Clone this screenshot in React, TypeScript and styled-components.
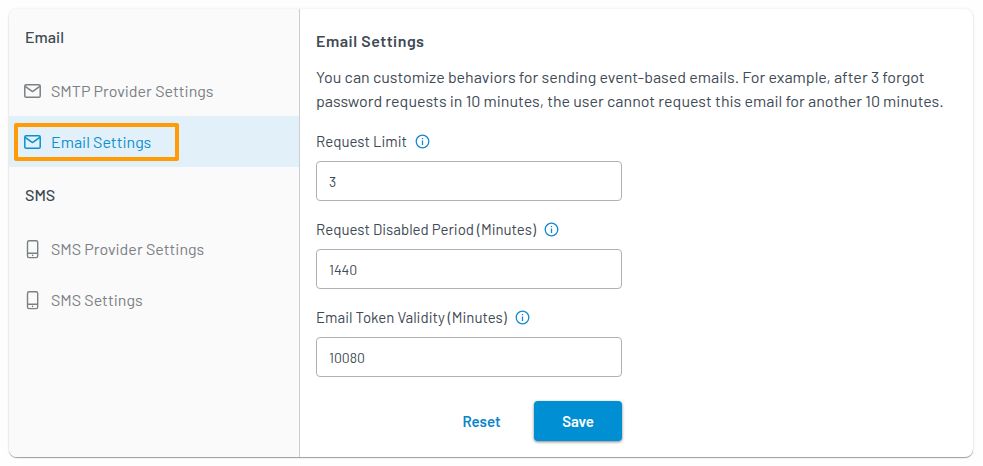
import React from "react";
import styled, { createGlobalStyle } from "styled-components";

const GlobalStyle = createGlobalStyle`
  *, *::before, *::after { box-sizing: border-box; }
  body {
    margin: 0;
    background: #fefefe;
    color: #404a54;
    font-family: Barlow, Roboto, "Liberation Sans", sans-serif;
    font-size: 16px;
  }
`;

const Page = styled.main`
  height: 466px;
  padding: 9px 10px 9px 9px;
`;

const Card = styled.div`
  display: flex;
  height: 448px;
  border-radius: 8px;
  overflow: hidden;
  background: #fff;
  box-shadow: 0 1px 1px rgba(0, 0, 0, 0.36), 0 0 3px rgba(0, 0, 0, 0.1);
`;

const Sidebar = styled.nav`
  width: 291px;
  flex: none;
  background: #fafafa;
  border-right: 1px solid #cbcdcf;
`;

const GroupTitle = styled.div`
  height: 56px;
  padding: 0 16px;
  font-weight: 500;
  line-height: 55px;
`;

const NavItem = styled.a<{ $active?: boolean }>`
  position: relative;
  display: flex;
  align-items: center;
  gap: 10px;
  height: 51px;
  padding: 0 15px;
  color: ${(p) => (p.$active ? "#0a8fd2" : "#7b8085")};
  background: ${(p) => (p.$active ? "#e2f1f9" : "transparent")};
`;

const Highlight = styled.span`
  position: absolute;
  left: 5px;
  top: 7px;
  width: 165px;
  height: 38px;
  border: 4px solid #ff9b05;
  border-radius: 2px;
`;

const Content = styled.section`
  flex: 1;
  padding: 20px 16px 0;
`;

const Title = styled.h1`
  margin: 0;
  font-size: 16px;
  font-weight: 600;
  letter-spacing: 0.5px;
  line-height: 23px;
`;

const Description = styled.p`
  margin: 13px 0 0;
  line-height: 24px;
`;

const Form = styled.form`
  width: 306px;
  padding-top: 16px;
`;

const Field = styled.label`
  display: block;
  height: 88px;
`;

const FieldLabel = styled.span`
  display: flex;
  align-items: center;
  gap: 8px;
  height: 24px;
  margin-bottom: 8px;
  font-size: 15px;
  white-space: nowrap;
`;

const Input = styled.input`
  display: block;
  width: 306px;
  height: 40px;
  padding: 1px 12px 0;
  border: 1px solid #aeb2b5;
  border-radius: 4px;
  background: #fff;
  color: #404a54;
  font: 14px Barlow, Roboto, "Liberation Sans", sans-serif;
  outline: none;
`;

const Actions = styled.div`
  display: flex;
  justify-content: flex-end;
  padding-top: 8px;
`;

const Button = styled.button<{ $primary?: boolean }>`
  width: ${(p) => (p.$primary ? 88 : 105)}px;
  height: 40px;
  padding: 0;
  border: 0;
  border-radius: 4px;
  font: 600 15px Barlow, Roboto, "Liberation Sans", sans-serif;
  color: ${(p) => (p.$primary ? "#fff" : "#0a85c9")};
  background: ${(p) => (p.$primary ? "#008fd3" : "transparent")};
  box-shadow: ${(p) => (p.$primary ? "0 1px 3px rgba(0, 0, 0, 0.5)" : "none")};
`;

const Icon = styled.svg`
  flex: none;
  display: block;
  fill: none;
  stroke: currentColor;
`;

const InfoSvg = styled(Icon)`
  color: #1289cf;
`;

const MailIcon = () => (
  <Icon width="17" height="17" viewBox="0 0 17 17" strokeWidth="1.5" strokeLinejoin="round">
    <rect x="0.8" y="2.7" width="15.4" height="12.6" rx="1.4" />
    <path d="M1.2 4.4L8.5 9.6L15.8 4.4" />
  </Icon>
);

const PhoneIcon = () => (
  <Icon width="17" height="20" viewBox="0 0 17 20" strokeWidth="1.4">
    <rect x="3.5" y="1.8" width="10.2" height="16.8" rx="1.6" />
    <path d="M3.5 14.2H13.7" />
    <circle cx="8.6" cy="16.4" r="0.8" fill="currentColor" stroke="none" />
  </Icon>
);

const InfoIcon = () => (
  <InfoSvg width="15" height="15" viewBox="0 0 15 15" strokeWidth="1.3">
    <circle cx="7.5" cy="7.5" r="6.3" />
    <path d="M7.5 6.5V11M7.5 4V5.3" />
  </InfoSvg>
);

const fields = [
  { label: "Request Limit", value: "3" },
  { label: "Request Disabled Period (Minutes)", value: "1440" },
  { label: "Email Token Validity (Minutes)", value: "10080" },
];

export default function App() {
  return (
    <>
      <GlobalStyle />
      <Page>
        <Card>
          <Sidebar>
            <GroupTitle>Email</GroupTitle>
            <NavItem><MailIcon />SMTP Provider Settings</NavItem>
            <NavItem $active><MailIcon />Email Settings<Highlight /></NavItem>
            <GroupTitle>SMS</GroupTitle>
            <NavItem><PhoneIcon />SMS Provider Settings</NavItem>
            <NavItem><PhoneIcon />SMS Settings</NavItem>
          </Sidebar>
          <Content>
            <Title>Email Settings</Title>
            <Description>
              You can customize behaviors for sending event-based emails. For example, after 3 forgot
              password requests in 10 minutes, the user cannot request this email for another 10 minutes.
            </Description>
            <Form>
              {fields.map((f) => (
                <Field key={f.label}>
                  <FieldLabel>{f.label}<InfoIcon /></FieldLabel>
                  <Input defaultValue={f.value} />
                </Field>
              ))}
              <Actions>
                <Button type="button">Reset</Button>
                <Button type="button" $primary>Save</Button>
              </Actions>
            </Form>
          </Content>
        </Card>
      </Page>
    </>
  );
}
